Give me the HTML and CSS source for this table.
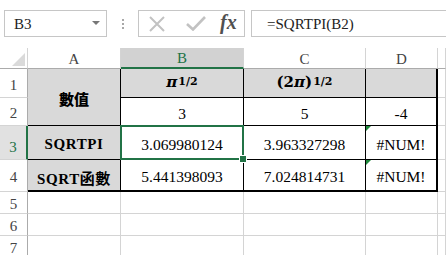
FILE: index.html
```html
<!DOCTYPE html>
<html lang="zh-Hant">
<head>
<meta charset="utf-8">
<title>SQRTPI</title>
<link rel="stylesheet" href="styles.css">
</head>
<body>
<div class="app">
  <div class="fbar">
    <div class="namebox"><span class="ref">B3</span><span class="caret"></span></div>
    <div class="grip"><i></i><i></i><i></i></div>
    <div class="btns">
      <svg class="ico" width="18" height="16" viewBox="0 0 18 16"><path d="M2 1 L16 15 M16 1 L2 15" stroke="#c2c2c2" stroke-width="2" fill="none"/></svg>
      <svg class="ico chk" width="20" height="15" viewBox="0 0 20 15"><path d="M1 8 L7 13.5 L19 1" stroke="#c2c2c2" stroke-width="2.6" fill="none"/></svg>
      <span class="fx">fx</span>
    </div>
    <div class="formula">=SQRTPI(B2)</div>
  </div>

  <div class="sheet">
    <!-- column headers -->
    <div class="ch corner"><span class="tri"></span></div>
    <div class="ch">A</div>
    <div class="ch sel">B</div>
    <div class="ch">C</div>
    <div class="ch">D</div>
    <div class="ch last"></div>

    <!-- row 1 -->
    <div class="rh">1</div>
    <div class="c hd merged">數值</div>
    <div class="c hd math"><b class="pi">π</b><sup>1/2</sup></div>
    <div class="c hd math"><b>(2</b><b class="pi">π</b><b>)</b><sup>1/2</sup></div>
    <div class="c hd edge"></div>
    <div class="g"></div>

    <!-- row 2 -->
    <div class="rh">2</div>
    <div class="c num">3</div>
    <div class="c num">5</div>
    <div class="c num edge">-4</div>
    <div class="g"></div>

    <!-- row 3 -->
    <div class="rh rsel">3</div>
    <div class="c hd lbl">SQRTPI</div>
    <div class="c num active">3.069980124<span class="handle"></span></div>
    <div class="c num">3.963327298</div>
    <div class="c num edge err">#NUM!</div>
    <div class="g"></div>

    <!-- row 4 -->
    <div class="rh">4</div>
    <div class="c hd lbl foot">SQRT函數</div>
    <div class="c num foot">5.441398093</div>
    <div class="c num foot">7.024814731</div>
    <div class="c num edge foot err">#NUM!</div>
    <div class="g"></div>

    <!-- empty rows -->
    <div class="rh">5</div><div class="g"></div><div class="g"></div><div class="g"></div><div class="g"></div><div class="g"></div>
    <div class="rh">6</div><div class="g"></div><div class="g"></div><div class="g"></div><div class="g"></div><div class="g"></div>
    <div class="rh">7</div><div class="g"></div><div class="g"></div><div class="g"></div><div class="g"></div><div class="g"></div>
  </div>
</div>
</body>
</html>
```

FILE: styles.css
```css
* { box-sizing: border-box; }

html, body {
  margin: 0;
  padding: 0;
  background: #fff;
}

body {
  width: 446px;
  height: 255px;
  overflow: hidden;
  font-family: "Liberation Serif", "Noto Sans CJK TC", serif;
  color: #000;
}

/* formula bar */
.fbar {
  display: flex;
  align-items: stretch;
  height: 48px;
  padding: 10px 0 11px 4px;
}

.namebox {
  width: 103px;
  border: 1px solid #c6c6c6;
  display: flex;
  align-items: center;
  justify-content: space-between;
  padding: 0 6px 0 9px;
  font-size: 15px;
  color: #222;
}

.ref { padding-top: 1px; }

.caret {
  width: 0;
  height: 0;
  border-left: 4px solid transparent;
  border-right: 4px solid transparent;
  border-top: 4px solid #777;
  margin-top: -2px;
}

.grip {
  width: 31px;
  display: flex;
  flex-direction: column;
  align-items: center;
  justify-content: center;
  gap: 2px;
}

.grip i {
  display: block;
  width: 2px;
  height: 2px;
  background: #a8a8a8;
}

.btns {
  width: 107px;
  border: 1px solid #c6c6c6;
  display: flex;
  align-items: center;
  padding-left: 9px;
}

.ico { display: block; }
.chk { margin-left: 20px; }

.fx {
  margin-left: 14px;
  font-family: "Liberation Serif", serif;
  font-style: italic;
  font-weight: bold;
  font-size: 20px;
  color: #505050;
  margin-top: -3px;
}

.formula {
  flex: 1;
  margin-left: 6px;
  border: 1px solid #c6c6c6;
  border-right: none;
  display: flex;
  align-items: center;
  padding-left: 15px;
  padding-top: 1px;
  font-size: 15px;
  color: #222;
}

/* worksheet grid */
.sheet {
  display: grid;
  grid-template-columns: 28px 93px 123px 122px 72px 1fr;
  grid-template-rows: 21px 29px 28px 34px 32px 22px 22px 22px;
}

.sheet > div {
  border-right: 1px solid #d4d4d4;
  border-bottom: 1px solid #d4d4d4;
  display: flex;
  align-items: center;
  justify-content: center;
  font-size: 15px;
}

.ch {
  color: #444;
  border-bottom-color: #ababab !important;
  padding-top: 2px;
}

.ch.corner { position: relative; }

.tri {
  position: absolute;
  left: 12px;
  top: 5px;
  width: 13px;
  height: 13px;
  background: #dadada;
  clip-path: polygon(100% 0, 100% 100%, 0 100%);
}

.ch.sel {
  background: #d2d2d2;
  color: #217346;
  border-bottom: 2px solid #217346 !important;
}

.rh {
  color: #444;
  border-right-color: #ababab !important;
  padding-top: 4px;
}

.rh.rsel {
  background: #e1e1e1;
  color: #217346;
  border-right: 2px solid #217346 !important;
  padding-top: 10px;
}

.sheet > .c {
  border-right-color: #000;
  border-bottom-color: #000;
}

.sheet > .hd { background: #d9d9d9; }

.merged {
  grid-row: span 2;
  font-family: "Noto Sans CJK TC", sans-serif;
  font-weight: 900;
  font-size: 17px;
  padding-top: 3px;
}

.sheet > .math {
  font-family: "DejaVu Serif", serif;
  font-size: 15px;
  padding-bottom: 3px;
}

.math b { font-weight: bold; }
.math .pi { font-style: italic; }

.math sup {
  font-weight: bold;
  font-size: 11px;
  vertical-align: 7px;
  line-height: 0;
  margin-left: 1px;
}

.lbl {
  font-weight: bold;
  letter-spacing: 0.6px;
  padding-top: 4px;
}

.sheet > .num {
  padding-top: 4px;
  font-size: 15.5px;
}

.sheet > .edge { border-right: 2px solid #000; }

.sheet > .foot { border-bottom: 2px solid #000; }

.err { position: relative; }

.err::before {
  content: "";
  position: absolute;
  left: 0;
  top: 0;
  border-top: 5px solid #1f8a3c;
  border-right: 5px solid transparent;
}

.active { position: relative; }

.active::after {
  content: "";
  position: absolute;
  left: -1px;
  top: -1px;
  right: -1px;
  bottom: -1px;
  border: 2px solid #217346;
}

.handle {
  position: absolute;
  right: -3px;
  bottom: -3px;
  width: 6px;
  height: 6px;
  background: #217346;
  outline: 1px solid #fff;
  z-index: 2;
}
```
